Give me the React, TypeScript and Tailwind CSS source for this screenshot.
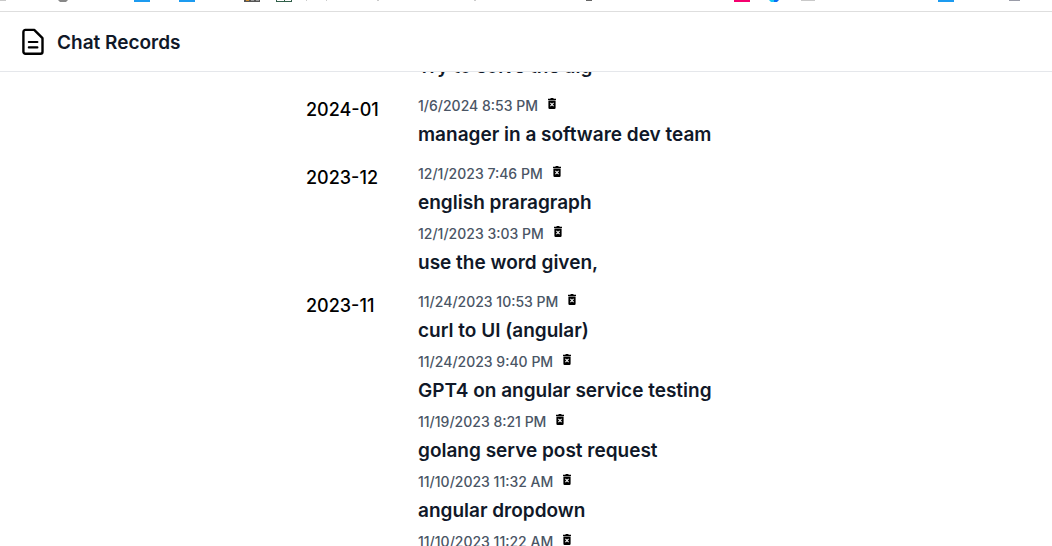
import React from 'react';

type ChatRecord = { time?: string; title?: string };

const groups: { month: string; records: ChatRecord[] }[] = [
  { month: '', records: [{ title: 'Try to solve the alg' }] },
  { month: '2024-01', records: [{ time: '1/6/2024 8:53 PM', title: 'manager in a software dev team' }] },
  {
    month: '2023-12',
    records: [
      { time: '12/1/2023 7:46 PM', title: 'english praragraph' },
      { time: '12/1/2023 3:03 PM', title: 'use the word given,' },
    ],
  },
  {
    month: '2023-11',
    records: [
      { time: '11/24/2023 10:53 PM', title: 'curl to UI (angular)' },
      { time: '11/24/2023 9:40 PM', title: 'GPT4 on angular service testing' },
      { time: '11/19/2023 8:21 PM', title: 'golang serve post request' },
      { time: '11/10/2023 11:32 AM', title: 'angular dropdown' },
      { time: '11/10/2023 11:22 AM' },
    ],
  },
];

function DocumentIcon() {
  return (
    <svg viewBox="0 0 24 28" className="h-7 w-6" fill="none" stroke="#000" strokeWidth="2.4" strokeLinecap="round" strokeLinejoin="round" aria-hidden="true">
      <path d="M4.4 1.9H13.2L21.5 10.2V23.8A2 2 0 0 1 19.5 25.8H4.4A2 2 0 0 1 2.4 23.8V3.9A2 2 0 0 1 4.4 1.9Z" />
      <path strokeWidth="2.1" d="M7.8 14H16.4M7.8 19.4H16.4" />
    </svg>
  );
}

function DeleteIcon() {
  return (
    <svg viewBox="0 0 8 11" className="h-[11px] w-2" aria-hidden="true">
      <path d="M0 .7H2.3L2.8 0H5.2L5.7.7H8V2H0ZM.4 2.5H7.6V9.8A1.2 1.2 0 0 1 6.4 11H1.6A1.2 1.2 0 0 1 .4 9.8Z" />
      <path d="M2.4 4.9L5.6 8.1M5.6 4.9L2.4 8.1" stroke="#fff" strokeWidth="1.1" />
    </svg>
  );
}

// Bottom edge of the favicons in the bookmarks bar
function Favicons() {
  return (
    <svg className="h-[2px] w-[1052px] shrink-0" viewBox="0 0 1052 2" aria-hidden="true">
      <path fill="#c9c9c9" d="M0 0h6v1H0zM801 0h14v1h-14z" />
      <path fill="#888" d="M58 0h10l-2 2h-6z" />
      <path fill="#1d9bf0" d="M134 0h16v2h-16zM179 0h16v2h-16zM938 0h16v2h-16z" />
      <path fill="#555" d="M244 0h16v2h-16z" />
      <path fill="#d08b2c" d="M246 0h3v1h-3z" />
      <path fill="#999" d="M251 0h3v1h-3zM256 0h3v1h-3z" />
      <path fill="#315f49" d="M276 0h1v1h7v-1h1v1h6v-1h1v2h-16z" />
      <path fill="#ccc" d="M377 0h2v1h-2zM474 0h2v1h-2zM306 0h1v1h-1zM326 0h1v1h-1z" />
      <path fill="#666" d="M586 0h6v1h-6z" />
      <path fill="#f5006e" d="M734 0h16v2h-16z" />
      <path fill="#18c8f5" d="M769 0h5v2h-3z" />
      <path fill="#0c6cf2" d="M774 0h5l-2 2h-3z" />
      <path fill="#9a9ca8" d="M1009 0h11v1h-11z" />
    </svg>
  );
}

function RecordItem({ record }: { record: ChatRecord }) {
  return (
    <li className="pb-0.5">
      <div className="flex h-6 items-center gap-2.5">
        <time className="text-sm font-medium text-gray-600">{record.time}</time>
        {record.time && (
          <button type="button" aria-label="Delete" className="mb-1.5 text-black">
            <DeleteIcon />
          </button>
        )}
      </div>
      <h3 className="h-[34px] text-[19px] leading-[34px] font-semibold text-gray-900">{record.title}</h3>
    </li>
  );
}

export default function App() {
  return (
    <div className="flex h-screen flex-col overflow-hidden bg-white font-['Inter',sans-serif]">
      <div className="flex h-3 shrink-0 items-start overflow-hidden border-b border-[#dedede]">
        <Favicons />
      </div>
      <header className="z-10 flex h-15 shrink-0 items-center gap-3 border-b border-gray-200 bg-white px-[21px]">
        <DocumentIcon />
        <h1 className="pt-0.5 text-[19px] leading-7 font-semibold text-gray-900">Chat Records</h1>
      </header>
      <main className="min-h-0 flex-1 overflow-hidden">
        <div className="mx-auto -mt-12 max-w-[440px] space-y-2 pt-[2px]">
          {groups.map((group) => (
            <section key={group.month} className="flex">
              <h2 className="w-28 shrink-0 pt-0.5 text-lg font-medium text-black">{group.month}</h2>
              <ul className="min-w-0 flex-1">
                {group.records.map((record, i) => (
                  <RecordItem key={i} record={record} />
                ))}
              </ul>
            </section>
          ))}
        </div>
      </main>
    </div>
  );
}
